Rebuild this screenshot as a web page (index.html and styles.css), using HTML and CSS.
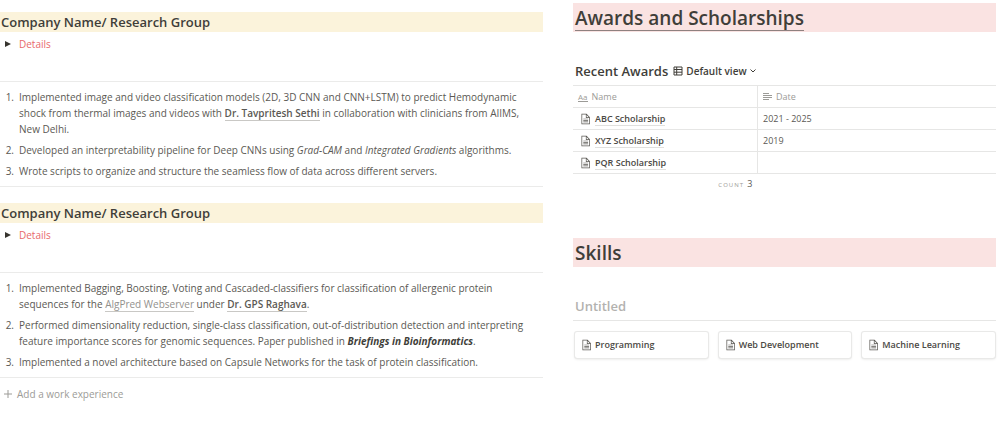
FILE: index.html
```html
<!DOCTYPE html>
<html lang="en">
<head>
  <meta charset="utf-8">
  <title>Work Experience</title>
  <link rel="stylesheet" href="styles.css">
</head>
<body>
  <svg class="sprite" aria-hidden="true">
    <symbol id="page-icon" viewBox="0 0 30 30">
      <path d="M4 1h14l9 9v19H4z M6 3v24h19V12h-9V3z M18 4v6h6z M9 14h13v2H9z M9 18h13v2H9z M9 22h13v2H9z" fill-rule="evenodd"/>
    </symbol>
  </svg>
  <div class="page">
    <main class="experience">
      <section class="job">
        <h2>Company Name/ Research Group</h2>
        <details>
          <summary>Details</summary>
        </details>
        <ol>
          <li>Implemented image and video classification models (2D, 3D CNN and CNN+LSTM) to predict Hemodynamic shock from thermal images and videos with <a href="#" class="person">Dr. Tavpritesh Sethi</a> in collaboration with clinicians from AIIMS, New Delhi.</li>
          <li>Developed an interpretability pipeline for Deep CNNs using <em>Grad-CAM</em> and <em>Integrated Gradients</em> algorithms.</li>
          <li>Wrote scripts to organize and structure the seamless flow of data across different servers.</li>
        </ol>
      </section>

      <section class="job">
        <h2>Company Name/ Research Group</h2>
        <details>
          <summary>Details</summary>
        </details>
        <ol>
          <li>Implemented Bagging, Boosting, Voting and Cascaded-classifiers for classification of allergenic protein sequences for the <a href="#" class="site">AlgPred Webserver</a> under <a href="#" class="person">Dr. GPS Raghava</a>.</li>
          <li>Performed dimensionality reduction, single-class classification, out-of-distribution detection and interpreting feature importance scores for genomic sequences. Paper published in <strong><em>Briefings in Bioinformatics</em></strong>.</li>
          <li>Implemented a novel architecture based on Capsule Networks for the task of protein classification.</li>
        </ol>
      </section>

      <button type="button" class="add">
        <svg viewBox="0 0 8 8"><path d="M4 0v8M0 4h8"/></svg>
        Add a work experience
      </button>
    </main>

    <aside class="side">
      <section class="awards">
        <h1><span class="underlined">Awards and Scholarships</span></h1>
        <div class="view-bar">
          <h3>Recent Awards</h3>
          <button type="button" class="view">
            <svg class="grid-icon" viewBox="0 0 10 10"><path d="M1 1h8v8H1zM1 3.500h8M1 6.200h8M3.700 1v8"/></svg>
            Default view
            <svg class="chevron" viewBox="0 0 6 4"><path d="M.5.5L3 3 5.500.5"/></svg>
          </button>
        </div>
        <table>
          <thead>
            <tr>
              <th class="name"><span class="cell"><span class="aa">Aa</span>Name</span></th>
              <th><span class="cell"><svg class="lines" viewBox="0 0 9 8"><path d="M0 .5h6M0 2.500h9M0 4.500h9M0 6.500h6"/></svg>Date</span></th>
            </tr>
          </thead>
          <tbody>
            <tr>
              <td><span class="cell"><svg class="doc"><use href="#page-icon"/></svg><a href="#">ABC Scholarship</a></span></td>
              <td>2021 - 2025</td>
            </tr>
            <tr>
              <td><span class="cell"><svg class="doc"><use href="#page-icon"/></svg><a href="#">XYZ Scholarship</a></span></td>
              <td>2019</td>
            </tr>
            <tr>
              <td><span class="cell"><svg class="doc"><use href="#page-icon"/></svg><a href="#">PQR Scholarship</a></span></td>
              <td></td>
            </tr>
          </tbody>
          <tfoot>
            <tr>
              <td class="count"><small>COUNT</small> 3</td>
              <td></td>
            </tr>
          </tfoot>
        </table>
      </section>

      <section class="skills">
        <h1>Skills</h1>
        <h3>Untitled</h3>
        <div class="cards">
          <a href="#" class="card"><svg class="doc"><use href="#page-icon"/></svg>Programming</a>
          <a href="#" class="card"><svg class="doc"><use href="#page-icon"/></svg>Web Development</a>
          <a href="#" class="card"><svg class="doc"><use href="#page-icon"/></svg>Machine Learning</a>
        </div>
      </section>
    </aside>
  </div>
</body>
</html>
```
FILE: styles.css
```css
body {
  margin: 0;
  font-family: "Segoe UI", "Open Sans", "Noto Sans", sans-serif;
  font-size: 10px;
  line-height: 16px;
  color: #5b5954;
  background-color: #fff;
}

h1, h2, h3 {
  margin: 0;
  font-weight: 600;
  color: #403e39;
}

a {
  color: inherit;
  text-decoration: none;
}

button {
  display: flex;
  align-items: center;
  padding: 0;
  border: none;
  background: none;
  font: inherit;
  cursor: pointer;
}

.sprite {
  position: absolute;
  width: 0;
  height: 0;
}

.page {
  display: grid;
  grid-template-columns: 543fr 423fr;
  gap: 30px;
  padding-right: 9px;
}

/* work experience */
.experience {
  padding-top: 12px;
}

.job {
  margin-bottom: 16px;
}

h2 {
  padding-left: 1px;
  font-size: 13px;
  line-height: 20px;
  background-color: #fbf3db;
}

details {
  height: 45px;
  padding-top: 4px;
}

summary {
  display: flex;
  align-items: center;
  color: #e8696b;
  cursor: pointer;
}

summary::before {
  content: "";
  margin: 0 8px 0 5px;
  border-left: 6px solid #37352f;
  border-top: 3px solid transparent;
  border-bottom: 3px solid transparent;
}

ol {
  display: flex;
  flex-direction: column;
  gap: 5px;
  margin: 0;
  padding: 7px 10px 7px 19px;
  border-top: 1px solid #ebebea;
  border-bottom: 1px solid #ebebea;
}

li::marker {
  content: counter(list-item) ".\2002";
}

.person {
  font-weight: 600;
  border-bottom: 1px solid #c9c8c5;
}

.site {
  color: #93918d;
  border-bottom: 1px solid #c9c8c5;
}

strong {
  color: #403e39;
}

.add {
  gap: 5px;
  margin-left: 4px;
  margin-top: -8px;
  color: #9c9b97;
}

.add svg {
  width: 8px;
  height: 8px;
  stroke: #9c9b97;
}

/* awards */
.side {
  padding-top: 3px;
}

h1 {
  height: 29px;
  padding-left: 2px;
  font-size: 19px;
  line-height: 31px;
  background-color: #fae3e2;
}

.underlined {
  display: inline-block;
  height: 27px;
  border-bottom: 1px solid #8f8180;
}

h3 {
  font-size: 13px;
  line-height: 20px;
}

.view-bar {
  display: flex;
  align-items: center;
  gap: 5px;
  margin-top: 29px;
  padding-left: 2px;
}

.view {
  gap: 3px;
  font-weight: 600;
  color: #403e39;
}

.view svg {
  fill: none;
  stroke: #403e39;
}

.grid-icon {
  width: 10px;
  height: 10px;
}

.chevron {
  width: 6px;
  height: 4px;
}

table {
  width: 100%;
  margin-top: 4px;
  border-collapse: collapse;
  table-layout: fixed;
  font-size: 9px;
}

th, td {
  height: 21px;
  padding: 0 5px;
  border-top: 1px solid #e6e6e5;
  text-align: left;
}

th {
  font-weight: 400;
  color: #9c9b97;
}

.name {
  width: 174px;
}

th + th, tbody td + td {
  border-left: 1px solid #e6e6e5;
}

.cell {
  display: flex;
  align-items: center;
  gap: 4px;
}

td .cell {
  padding-left: 2px;
}

.cell a {
  font-weight: 600;
  line-height: 13px;
  color: #4b4944;
  border-bottom: 1px solid #e0e0de;
}

.aa {
  font-size: 8px;
  line-height: 9px;
  border-bottom: 1px solid #9c9b97;
}

.lines {
  width: 9px;
  height: 8px;
  stroke: #9c9b97;
}

.doc {
  flex: none;
  width: 11px;
  height: 12px;
  fill: #5b5954;
}

.count {
  text-align: right;
}

small {
  margin-right: 1px;
  font-size: 6px;
  letter-spacing: 1px;
  color: #9c9b97;
}

/* skills */
.skills {
  margin-top: 43px;
}

.skills h3 {
  margin-top: 29px;
  padding: 0 0 4px 2px;
  color: #b3b2af;
  border-bottom: 1px solid #e6e6e5;
}

.cards {
  display: grid;
  grid-template-columns: repeat(3, 1fr);
  gap: 11px;
  margin-top: 11px;
  padding: 0 1px 0 2px;
}

.card {
  display: flex;
  align-items: center;
  gap: 3px;
  padding: 5px 6px;
  font-size: 9px;
  font-weight: 600;
  color: #4b4944;
  border-radius: 2px;
  box-shadow: 0 0 0 1px #e9e9e8, 0 1px 3px #dcdcda;
}
```
